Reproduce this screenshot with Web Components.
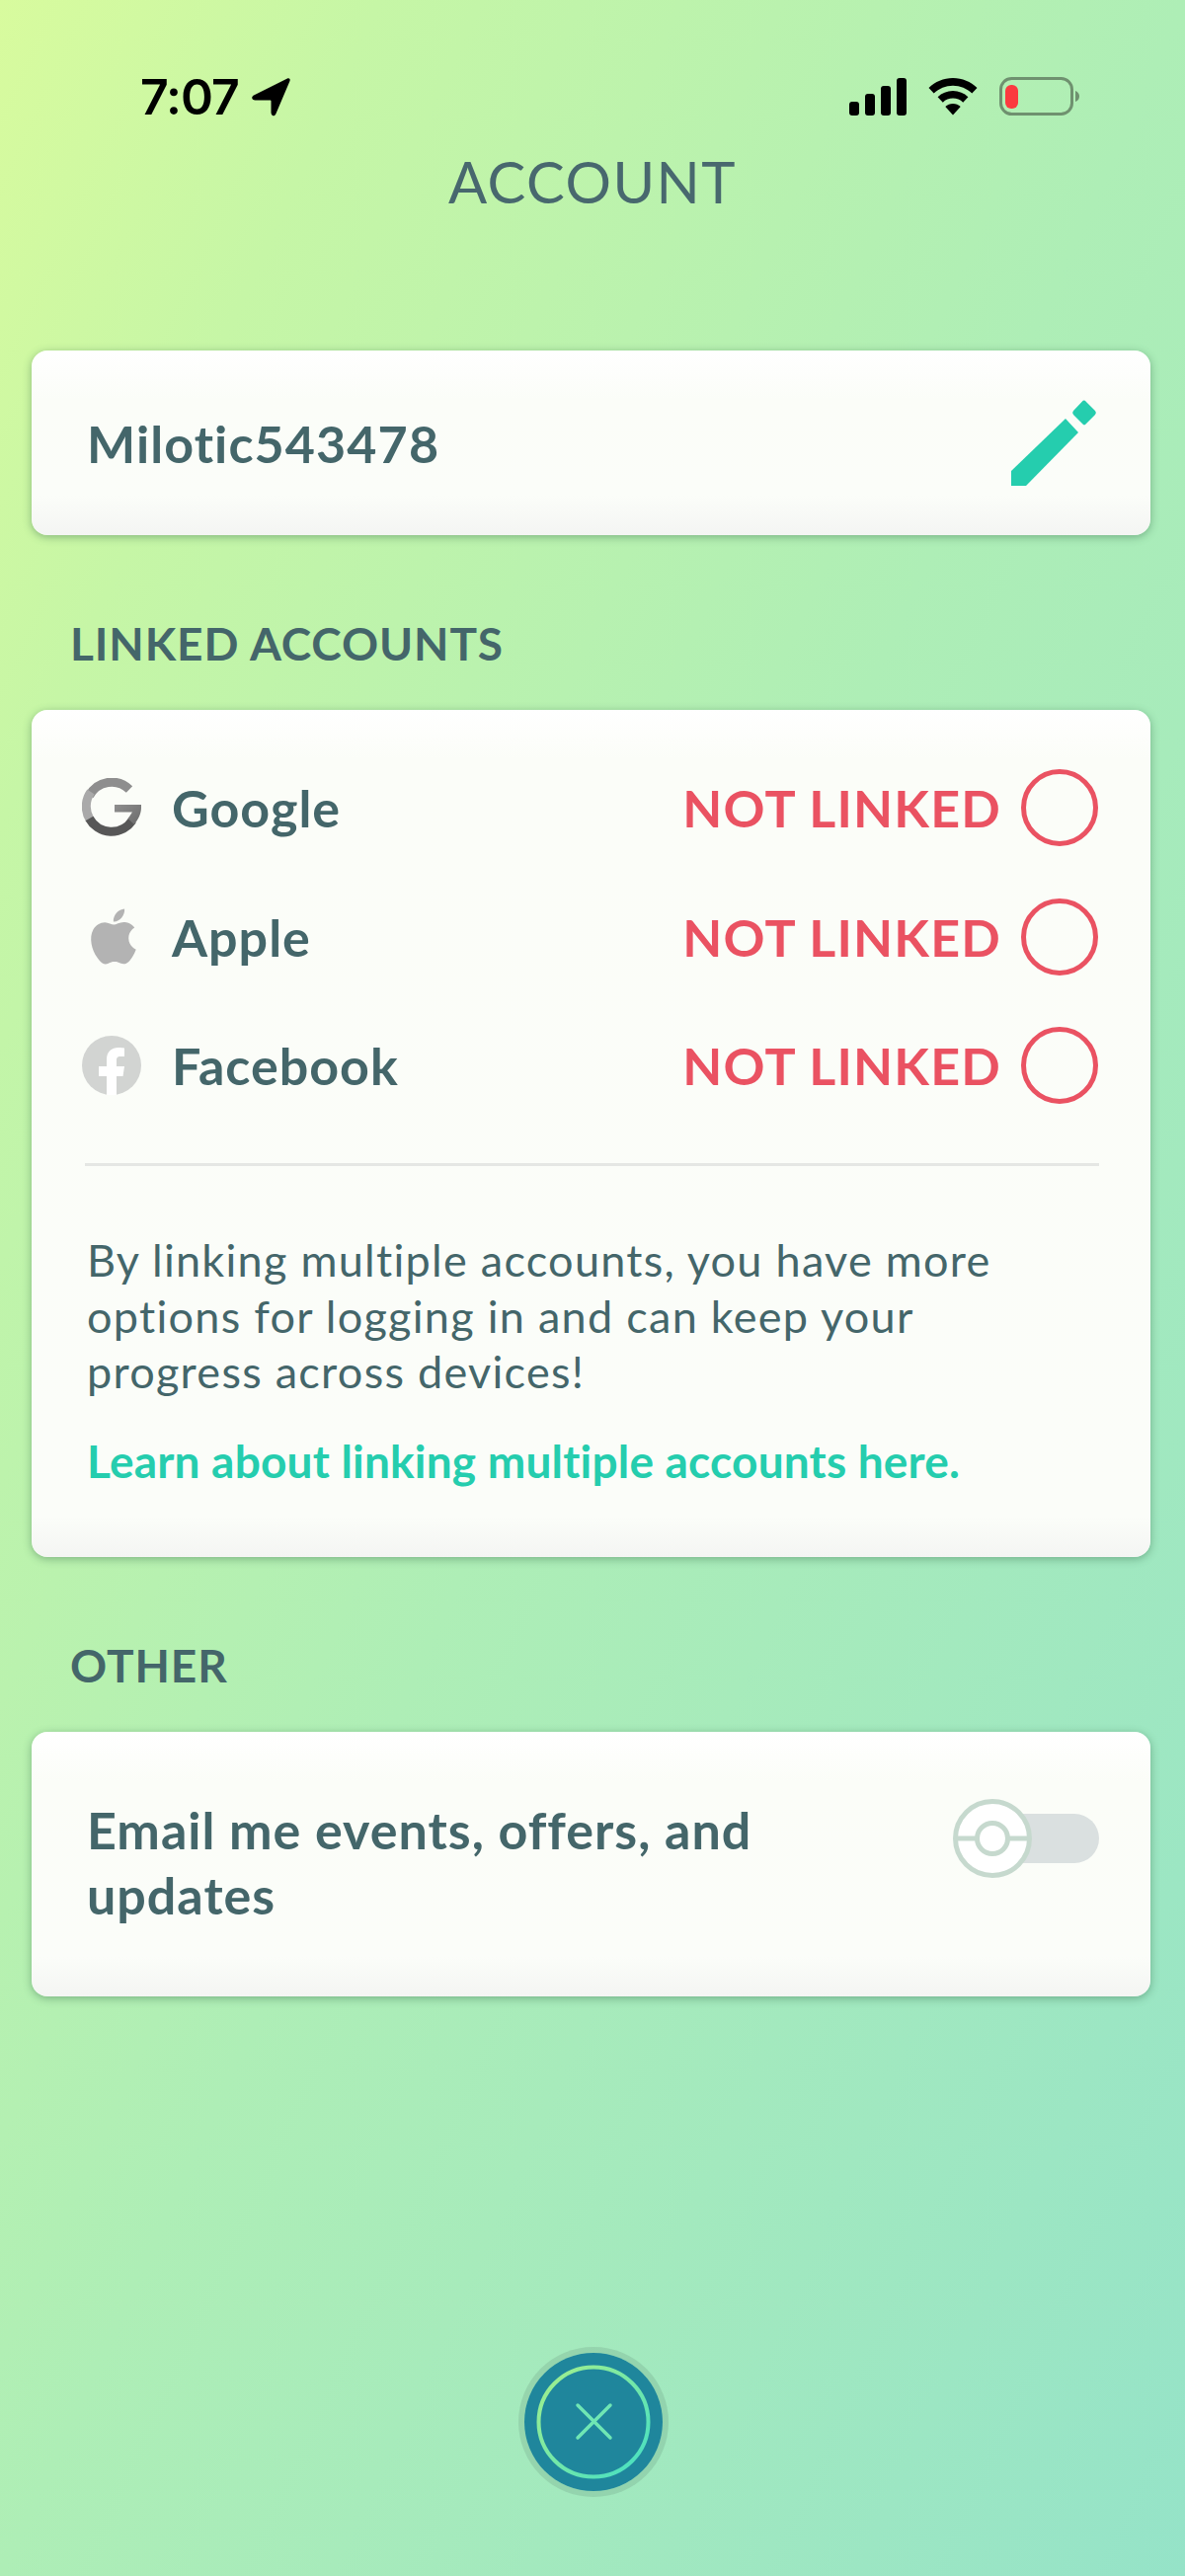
<!DOCTYPE html>
<html>
<head>
<meta charset="utf-8">
<title>Account</title>
<style>
    html, body { margin: 0; padding: 0; }
    body {
        width: 1200px;
        height: 2609px;
        overflow: hidden;
        font-family: Lato, "Open Sans", sans-serif;
        color: #44666a;
        background: linear-gradient(to bottom right, #d8fb9e 0%, #c6f6a6 16%, #aeeeb6 50%, #95e3c8 100%);
    }
</style>
</head>
<body>
<account-screen>
    <status-bar></status-bar>
    <screen-title>ACCOUNT</screen-title>

    <info-card style="margin-top: 136px; height: 187px">
        <name-row>Milotic543478</name-row>
    </info-card>

    <section-label style="margin-top: 83px">LINKED ACCOUNTS</section-label>
    <info-card style="height: 858px">
        <link-row provider="google">Google</link-row>
        <link-row provider="apple">Apple</link-row>
        <link-row provider="facebook">Facebook</link-row>
        <link-note link="Learn about linking multiple accounts here.">By linking multiple accounts, you have more options for logging in and can keep your progress across devices!</link-note>
    </info-card>

    <section-label style="margin-top: 83.500px">OTHER</section-label>
    <info-card style="height: 268px">
        <email-row>Email me events, offers, and updates</email-row>
    </info-card>

    <close-button></close-button>
</account-screen>

<script>
window.customElements.define("account-screen", class extends HTMLElement {
    constructor() {
        super();
        this.attachShadow({ mode: "open" });
        this.shadowRoot.innerHTML = `
            <style>
                :host {
                    display: flex;
                    flex-direction: column;
                    height: 2609px;
                    padding: 0 35px 0 32px;
                    box-sizing: border-box;
                }
            </style>
            <slot></slot>
        `;
    }
});

window.customElements.define("status-bar", class extends HTMLElement {
    constructor() {
        super();
        this.attachShadow({ mode: "open" });
        this.shadowRoot.innerHTML = `
            <style>
                :host {
                    display: flex;
                    align-items: center;
                    justify-content: space-between;
                    height: 40px;
                    margin: 78px 71px 0 110px;
                }
                .left { display: flex; align-items: center; gap: 12px; }
                .time {
                    font: 600 50px/40px Inter, "Liberation Sans", sans-serif;
                    color: #000;
                    letter-spacing: -1px;
                }
                .right { display: flex; align-items: center; gap: 22px; }
                svg { display: block; }
            </style>
            <div class="left">
                <span class="time">7:07</span>
                <svg width="40" height="40" viewBox="0 0 40 40">
                    <path d="M37 1.500 3 18.500c-3 1.600-2 5 1.500 5H19.500c.6 0 1 .4 1 1V36c0 3.500 3.400 4.300 4.800 1.400L39.400 4.300C40.300 2.300 39 .5 37 1.500Z" fill="#000"/>
                </svg>
            </div>
            <div class="right">
                <svg width="58" height="40" viewBox="0 0 58 40">
                    <rect x="0" y="25" width="10" height="14" rx="3" fill="#000"/>
                    <rect x="16" y="17" width="10" height="22" rx="3" fill="#000"/>
                    <rect x="32" y="9" width="10" height="30" rx="3" fill="#000"/>
                    <rect x="48" y="1" width="10" height="38" rx="3" fill="#000"/>
                </svg>
                <svg width="50" height="38" viewBox="0 0 50 38">
                    <path d="M25 0C15.500 0 7 3.700 .5 10l5.200 5.500C11 10.600 17.600 7.700 25 7.700s14 2.900 19.300 7.800L49.500 10C43 3.700 34.500 0 25 0Z" fill="#000"/>
                    <path d="M25 13c-6 0-11.300 2.300-15.400 6.200l5.200 5.500C17.500 22.100 21 20.600 25 20.600s7.500 1.500 10.200 4.100l5.200-5.500C36.300 15.300 31 13 25 13Z" fill="#000"/>
                    <path d="M25 26c-3 0-5.600 1.100-7.700 3L25 37.500 32.700 29c-2.100-1.900-4.700-3-7.700-3Z" fill="#000"/>
                </svg>
                <svg width="82" height="40" viewBox="0 0 82 40">
                    <rect x="1.500" y="1.500" width="72" height="36" rx="11" fill="none" stroke="#6f916f" stroke-width="3"/>
                    <rect x="6" y="8" width="13" height="24" rx="6" fill="#fb3a3f"/>
                    <path d="M77 14c3 1 4 3.500 4 5.500s-1 4.500-4 5.500Z" fill="#6f916f"/>
                </svg>
            </div>
        `;
    }
});

window.customElements.define("screen-title", class extends HTMLElement {
    constructor() {
        super();
        this.attachShadow({ mode: "open" });
        this.shadowRoot.innerHTML = `
            <style>
                :host {
                    display: block;
                    margin-top: 31px;
                    padding-left: 3px;
                    font-size: 58px;
                    line-height: 70px;
                    letter-spacing: 1.500px;
                    text-align: center;
                    color: #48686e;
                }
            </style>
            <slot></slot>
        `;
    }
});

window.customElements.define("section-label", class extends HTMLElement {
    constructor() {
        super();
        this.attachShadow({ mode: "open" });
        this.shadowRoot.innerHTML = `
            <style>
                :host {
                    display: block;
                    margin: 0 0 39.500px 39px;
                    font-size: 46px;
                    line-height: 54px;
                    font-weight: 700;
                    letter-spacing: .9px;
                }
            </style>
            <slot></slot>
        `;
    }
});

window.customElements.define("info-card", class extends HTMLElement {
    constructor() {
        super();
        this.attachShadow({ mode: "open" });
        this.shadowRoot.innerHTML = `
            <style>
                :host {
                    display: block;
                    box-sizing: border-box;
                    border-radius: 16px;
                    background: linear-gradient(to bottom, #fff 0, #fbfdf8 50px, #fbfdf9 calc(100% - 40px), #f4f5f3 100%);
                    box-shadow: 0 2px 9px rgba(50, 105, 70, .45);
                }
            </style>
            <slot></slot>
        `;
    }
});

window.customElements.define("name-row", class extends HTMLElement {
    constructor() {
        super();
        this.attachShadow({ mode: "open" });
        this.shadowRoot.innerHTML = `
            <style>
                :host {
                    display: flex;
                    align-items: center;
                    justify-content: space-between;
                    height: 100%;
                    padding: 0 53px 0 56px;
                    box-sizing: border-box;
                    font-size: 52px;
                    font-weight: 700;
                    letter-spacing: 1.100px;
                }
                svg { display: block; }
            </style>
            <slot></slot>
            <svg width="90" height="90" viewBox="1022 403 90 90">
                <path d="M1079 423 1092 437 1039 491H1024V476Z" fill="#25cdae"/>
                <path d="M1096 405.500a2 2 0 0 1 3.500 0L1109 415a3 3 0 0 1 0 4L1099.500 428.500a2 2 0 0 1-3 0L1087 419a3 3 0 0 1 0-4Z" fill="#25cdae"/>
            </svg>
        `;
    }
});

const providerIcons = {
    google: `
        <svg width="60" height="60" viewBox="0 0 60 60">
            <defs>
                <linearGradient id="bar" x1="0" x2="1" y1="0" y2="1">
                    <stop offset="0" stop-color="#8f8f8f"/>
                    <stop offset="1" stop-color="#6a6a6a"/>
                </linearGradient>
            </defs>
            <path d="M48 11.500A25.500 25.500 0 0 0 7.500 18" fill="none" stroke="#8e8e8e" stroke-width="9"/>
            <path d="M9 14A25.500 25.500 0 0 0 8 42" fill="none" stroke="#a9a9a9" stroke-width="9"/>
            <path d="M7.500 41A25.500 25.500 0 0 0 51 43" fill="none" stroke="#575757" stroke-width="9"/>
            <path d="M33 27H60V30C60 36 57 42 53 47L46.500 41C49 38 50.500 35 51 34.500H33Z" fill="url(#bar)"/>
        </svg>`,
    apple: `
        <svg width="60" height="60" viewBox="0 0 60 60">
            <path transform="translate(4 1.500) scale(2.330)" d="M12.152 6.896c-.948 0-2.415-1.078-3.960-1.040-2.040.027-3.910 1.183-4.961 3.014-2.117 3.675-.546 9.103 1.519 12.090 1.013 1.454 2.208 3.090 3.792 3.039 1.520-.065 2.090-.987 3.935-.987 1.831 0 2.350.987 3.960.948 1.637-.026 2.676-1.480 3.676-2.948 1.156-1.688 1.636-3.325 1.662-3.415-.039-.013-3.182-1.221-3.220-4.857-.026-3.040 2.480-4.494 2.597-4.559-1.429-2.090-3.623-2.324-4.390-2.376-2-.156-3.675 1.090-4.610 1.090zM15.530 3.830c.843-1.012 1.400-2.427 1.245-3.830-1.207.052-2.662.805-3.532 1.818-.780.896-1.454 2.338-1.273 3.714 1.338.104 2.715-.688 3.559-1.701" fill="#b3b3b3"/>
        </svg>`,
    facebook: `
        <svg width="60" height="60" viewBox="0 0 60 60">
            <circle cx="30" cy="30" r="30" fill="#d2d4d2"/>
            <path d="M25 60V41H17V31H25V24C25 16 30 12 37 12C40 12 43 12.500 43 12.500V21H39C35.500 21 35 23 35 25V31H43L41.500 41H35V60Z" fill="#fff"/>
        </svg>`
};

window.customElements.define("link-row", class extends HTMLElement {
    constructor() {
        super();
        this.attachShadow({ mode: "open" });
        this.shadowRoot.innerHTML = `
            <style>
                :host {
                    display: flex;
                    align-items: center;
                    height: 130.500px;
                    padding: 0 53px 0 51px;
                    font-size: 52px;
                    font-weight: 700;
                    letter-spacing: 1px;
                }
                :host(:first-child) { margin-top: 34.500px; }
                .icon { width: 60px; height: 60px; margin-right: 31px; }
                svg { display: block; }
                .name { flex: 1; }
                .status { color: #ea5262; letter-spacing: 1.200px; margin-right: 20px; }
                .radio {
                    width: 78px;
                    height: 78px;
                    box-sizing: border-box;
                    border: 5px solid #ea5262;
                    border-radius: 50%;
                }
            </style>
            <div class="icon">${providerIcons[this.getAttribute("provider")]}</div>
            <div class="name"><slot></slot></div>
            <div class="status">NOT LINKED</div>
            <div class="radio"></div>
        `;
    }
});

window.customElements.define("link-note", class extends HTMLElement {
    constructor() {
        super();
        this.attachShadow({ mode: "open" });
        this.shadowRoot.innerHTML = `
            <style>
                :host {
                    display: block;
                    margin: 33.500px 52px 0 54px;
                    padding: 67px 0 0 2px;
                    border-top: 3px solid #e5e7e4;
                }
                .body {
                    font-size: 45px;
                    line-height: 56.500px;
                    letter-spacing: 1.280px;
                }
                .link {
                    margin-top: 34px;
                    font-size: 46px;
                    line-height: 56px;
                    font-weight: 700;
                    letter-spacing: .2px;
                    color: #25cdae;
                }
            </style>
            <div class="body"><slot></slot></div>
            <div class="link">${this.getAttribute("link")}</div>
        `;
    }
});

window.customElements.define("email-row", class extends HTMLElement {
    constructor() {
        super();
        this.attachShadow({ mode: "open" });
        this.shadowRoot.innerHTML = `
            <style>
                :host {
                    display: flex;
                    justify-content: space-between;
                    padding: 66.500px 52px 0 56px;
                    font-size: 52px;
                    line-height: 66px;
                    font-weight: 700;
                    letter-spacing: 1px;
                }
                .label { width: 700px; }
                .toggle { position: relative; width: 148px; height: 80px; flex: none; margin-top: 2px; }
                .track {
                    position: absolute;
                    right: 0;
                    top: 15px;
                    width: 110px;
                    height: 50px;
                    background: #dae0e0;
                    border-radius: 25px;
                }
                svg { position: absolute; left: 0; top: 0; display: block; }
            </style>
            <div class="label"><slot></slot></div>
            <div class="toggle">
                <div class="track"></div>
                <svg width="80" height="80" viewBox="0 0 80 80">
                    <circle cx="40" cy="40" r="37.500" fill="#fff" stroke="#c6d9ce" stroke-width="5"/>
                    <path d="M3 40H24M56 40H77" stroke="#c6d9ce" stroke-width="5"/>
                    <circle cx="40" cy="40" r="15.500" fill="#fff" stroke="#c6d9ce" stroke-width="5"/>
                </svg>
            </div>
        `;
    }
});

window.customElements.define("close-button", class extends HTMLElement {
    constructor() {
        super();
        this.attachShadow({ mode: "open" });
        this.shadowRoot.innerHTML = `
            <style>
                :host {
                    display: block;
                    width: 140px;
                    height: 140px;
                    margin: 361px 0 0 499px;
                    border-radius: 50%;
                    box-shadow: 0 0 0 6px rgba(90, 130, 110, .2);
                }
                svg { display: block; }
            </style>
            <svg width="140" height="140" viewBox="0 0 140 140">
                <defs>
                    <linearGradient id="ring" x1="0" y1="0" x2="1" y2="1">
                        <stop offset="0" stop-color="#a6f08a"/>
                        <stop offset="1" stop-color="#42dfc6"/>
                    </linearGradient>
                </defs>
                <circle cx="70" cy="70" r="70" fill="#1f869c"/>
                <circle cx="70" cy="70" r="55.500" fill="none" stroke="url(#ring)" stroke-width="4"/>
                <path d="M54 53 87 86M87 53 54 86" stroke="#6fe6b4" stroke-width="3.500" stroke-linecap="round"/>
            </svg>
        `;
    }
});
</script>
</body>
</html>
